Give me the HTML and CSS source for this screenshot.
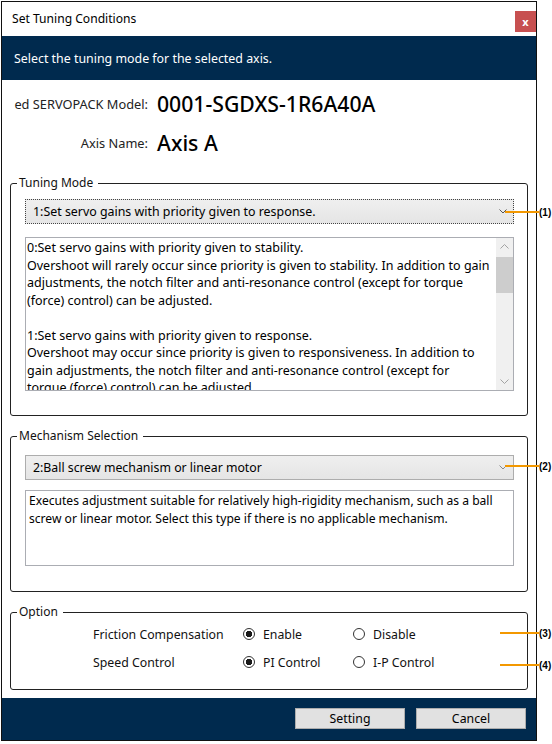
FILE: index.html
```html
<!DOCTYPE html>
<html lang="en">
<head>
  <meta charset="utf-8">
  <title>Set Tuning Conditions</title>
  <link rel="stylesheet" href="styles.css">
</head>
<body>
  <div class="screen">
    <div class="dialog">
      <div class="titlebar">
        <span class="title">Set Tuning Conditions</span>
        <span class="close">x</span>
      </div>

      <div class="banner">Select the tuning mode for the selected axis.</div>

      <div class="content">
        <div class="info">
          <div class="info-row">
            <span class="info-label">ed SERVOPACK Model:</span>
            <span class="info-value">0001-SGDXS-1R6A40A</span>
          </div>
          <div class="info-row">
            <span class="info-label">Axis Name:</span>
            <span class="info-value">Axis A</span>
          </div>
        </div>

        <!-- Tuning Mode -->
        <fieldset class="group">
          <legend>Tuning Mode</legend>
          <div class="group-body tuning-body">
            <div class="combo combo-focus">
              <span>1:Set servo gains with priority given to response.</span>
              <svg class="chevron" width="8" height="5" viewBox="0 0 8 5"><polyline points="0.5,0.5 4,4 7.5,0.5" fill="none" stroke="#555" stroke-width="1"/></svg>
            </div>
            <div class="memo memo-tall">
              <div class="memo-text">
                0:Set servo gains with priority given to stability.<br>
                Overshoot will rarely occur since priority is given to stability. In addition to gain<br>
                adjustments, the notch filter and anti-resonance control (except for torque<br>
                (force) control) can be adjusted.<br>
                <br>
                1:Set servo gains with priority given to response.<br>
                Overshoot may occur since priority is given to responsiveness. In addition to<br>
                gain adjustments, the notch filter and anti-resonance control (except for<br>
                torque (force) control) can be adjusted.
              </div>
              <div class="scrollbar">
                <svg class="scroll-arrow" width="9" height="5" viewBox="0 0 9 5"><polyline points="0.5,4.5 4.5,0.5 8.5,4.5" fill="none" stroke="#a3a3a3" stroke-width="1"/></svg>
                <div class="scroll-track"><div class="scroll-thumb"></div></div>
                <svg class="scroll-arrow" width="9" height="5" viewBox="0 0 9 5"><polyline points="0.5,0.5 4.5,4.5 8.5,0.5" fill="none" stroke="#a3a3a3" stroke-width="1"/></svg>
              </div>
            </div>
          </div>
        </fieldset>

        <!-- Mechanism Selection -->
        <fieldset class="group group-gap">
          <legend>Mechanism Selection</legend>
          <div class="group-body mech-body">
            <div class="combo">
              <span class="combo-big">2:Ball screw mechanism or linear motor</span>
              <svg class="chevron" width="8" height="5" viewBox="0 0 8 5"><polyline points="0.5,0.5 4,4 7.5,0.5" fill="none" stroke="#888" stroke-width="1"/></svg>
            </div>
            <div class="memo memo-short">
              <div class="memo-text memo-big">
                Executes adjustment suitable for relatively high-rigidity mechanism, such as a ball<br>
                screw or linear motor. Select this type if there is no applicable mechanism.
              </div>
            </div>
          </div>
        </fieldset>

        <!-- Option -->
        <fieldset class="group group-gap">
          <legend>Option</legend>
          <div class="group-body option-body">
            <div class="option-row">
              <span class="option-label">Friction Compensation</span>
              <span class="radio radio-on">Enable</span>
              <span class="radio">Disable</span>
            </div>
            <div class="option-row">
              <span class="option-label">Speed Control</span>
              <span class="radio radio-on">PI Control</span>
              <span class="radio">I-P Control</span>
            </div>
          </div>
        </fieldset>
      </div>

      <div class="footer">
        <span class="button">Setting</span>
        <span class="button">Cancel</span>
      </div>
    </div>

    <!-- callouts -->
    <div class="callout callout-1"><span class="callout-line"></span><span class="callout-num">(1)</span></div>
    <div class="callout callout-2"><span class="callout-line"></span><span class="callout-num">(2)</span></div>
    <div class="callout callout-3"><span class="callout-line"></span><span class="callout-num">(3)</span></div>
    <div class="callout callout-4"><span class="callout-line"></span><span class="callout-num">(4)</span></div>
  </div>
</body>
</html>
```

FILE: styles.css
```css
body {
  margin: 0;
  padding: 0;
  background-color: white;
  font-family: "Noto Sans", "Open Sans", sans-serif;
  color: #111;
}

.screen {
  position: relative;
  width: 552px;
  height: 744px;
  overflow: hidden;
}

.dialog {
  box-sizing: border-box;
  width: 536px;
  height: 740px;
  margin: 1px 0 0 1px;
  border: 1px solid #111;
  display: flex;
  flex-direction: column;
  background-color: white;
}

.titlebar {
  height: 34px;
  display: flex;
  align-items: flex-start;
  justify-content: space-between;
}

.title {
  font-size: 12.1px;
  padding: 8px 0 0 10px;
  color: #000;
}

.close {
  width: 21px;
  height: 21px;
  margin-top: 9px;
  background-color: #c75050;
  color: white;
  font-size: 11px;
  font-weight: bold;
  display: flex;
  align-items: center;
  justify-content: center;
}

.banner {
  height: 44px;
  background-color: #002a4e;
  color: white;
  font-size: 12.4px;
  padding-left: 12px;
  display: flex;
  align-items: center;
}

.content {
  flex: 1;
}

/* model / axis */
.info {
  padding-top: 4px;
}

.info-row {
  height: 39px;
  display: flex;
  align-items: center;
}

.info-label {
  width: 146px;
  text-align: right;
  font-size: 12.8px;
  color: #222;
}

.info-value {
  margin-left: 9px;
  font-size: 21.2px;
  font-weight: 500;
  color: #000;
}

/* group boxes */
.group {
  margin: 13px 8px 0;
  padding: 0;
  border: 1px solid #222;
  border-radius: 3px;
}

.group-gap {
  margin-top: 12px;
}

.group legend {
  margin-left: 6px;
  padding: 0 5px 0 2px;
  font-size: 12px;
  line-height: 16px;
  color: #111;
}

.group-body {
  padding: 0 13px 0 14px;
}

.tuning-body {
  padding-top: 8px;
  padding-bottom: 24px;
}

.mech-body {
  padding-top: 11px;
  padding-bottom: 25px;
}

.option-body {
  padding-top: 0;
  padding-bottom: 13px;
}

.combo {
  box-sizing: border-box;
  height: 25px;
  border: 1px solid #adadad;
  background: linear-gradient(#efefef, #e5e5e5);
  display: flex;
  align-items: center;
  justify-content: space-between;
  padding: 0 6px 0 7px;
  font-size: 12.4px;
  color: #000;
}

.combo-focus {
  border: 1px dotted #444;
}

.combo-big {
  font-size: 12.3px;
}

.memo {
  box-sizing: border-box;
  border: 1px solid #abadb3;
  background-color: white;
  display: flex;
  overflow: hidden;
}

.memo-tall {
  height: 154px;
  margin-top: 13px;
}

.memo-short {
  height: 76px;
  margin-top: 10px;
}

.memo-text {
  flex: 1;
  padding: 1px 0 0 1px;
  font-size: 12.5px;
  line-height: 17.5px;
  white-space: nowrap;
  color: #000;
}

.memo-big {
  padding: 1px 0 0 3px;
  font-size: 12.1px;
}

.scrollbar {
  flex: none;
  width: 17px;
  background-color: #f0f0f0;
  display: flex;
  flex-direction: column;
  align-items: center;
}

.scroll-arrow {
  flex: none;
  margin: 6px 0;
}

.scroll-track {
  flex: 1;
  width: 100%;
  padding-top: 2px;
}

.scroll-thumb {
  height: 36px;
  background-color: #cdcdcd;
}

/* option rows */
.option-row {
  height: 28px;
  display: flex;
  align-items: center;
  padding-left: 68px;
  font-size: 12.3px;
  color: #111;
}

.option-label {
  width: 150px;
}

.radio {
  width: 110px;
  display: flex;
  align-items: center;
}

.radio::before {
  content: "";
  box-sizing: border-box;
  width: 12px;
  height: 12px;
  margin-right: 8px;
  border: 1px solid #333;
  border-radius: 50%;
  background-color: white;
}

.radio-on::before {
  background: radial-gradient(circle, #1a1a1a 0 3px, white 3.5px);
}

/* bottom bar */
.footer {
  height: 42px;
  background-color: #002a4e;
  display: flex;
  justify-content: flex-end;
  align-items: flex-start;
  gap: 11px;
  padding-right: 10px;
}

.button {
  box-sizing: border-box;
  width: 110px;
  height: 21px;
  margin-top: 10px;
  background-color: #e1e1e1;
  border: 1px solid #adadad;
  font-size: 12.3px;
  color: #000;
  display: flex;
  align-items: center;
  justify-content: center;
}

/* annotation callouts drawn over the screenshot */
.callout {
  position: absolute;
  right: 0;
  display: flex;
  align-items: center;
  height: 12px;
}

.callout-line {
  height: 2px;
  background-color: #f39800;
}

.callout-num {
  font-family: "Liberation Sans", Arial, sans-serif;
  font-size: 10px;
  font-weight: bold;
  width: 13px;
  color: #000;
}

.callout-1 { top: 206px; }
.callout-1 .callout-line { width: 34px; }
.callout-2 { top: 460px; }
.callout-2 .callout-line { width: 34px; }
.callout-3 { top: 627px; }
.callout-3 .callout-line { width: 39px; }
.callout-4 { top: 659px; }
.callout-4 .callout-line { width: 39px; }
```
